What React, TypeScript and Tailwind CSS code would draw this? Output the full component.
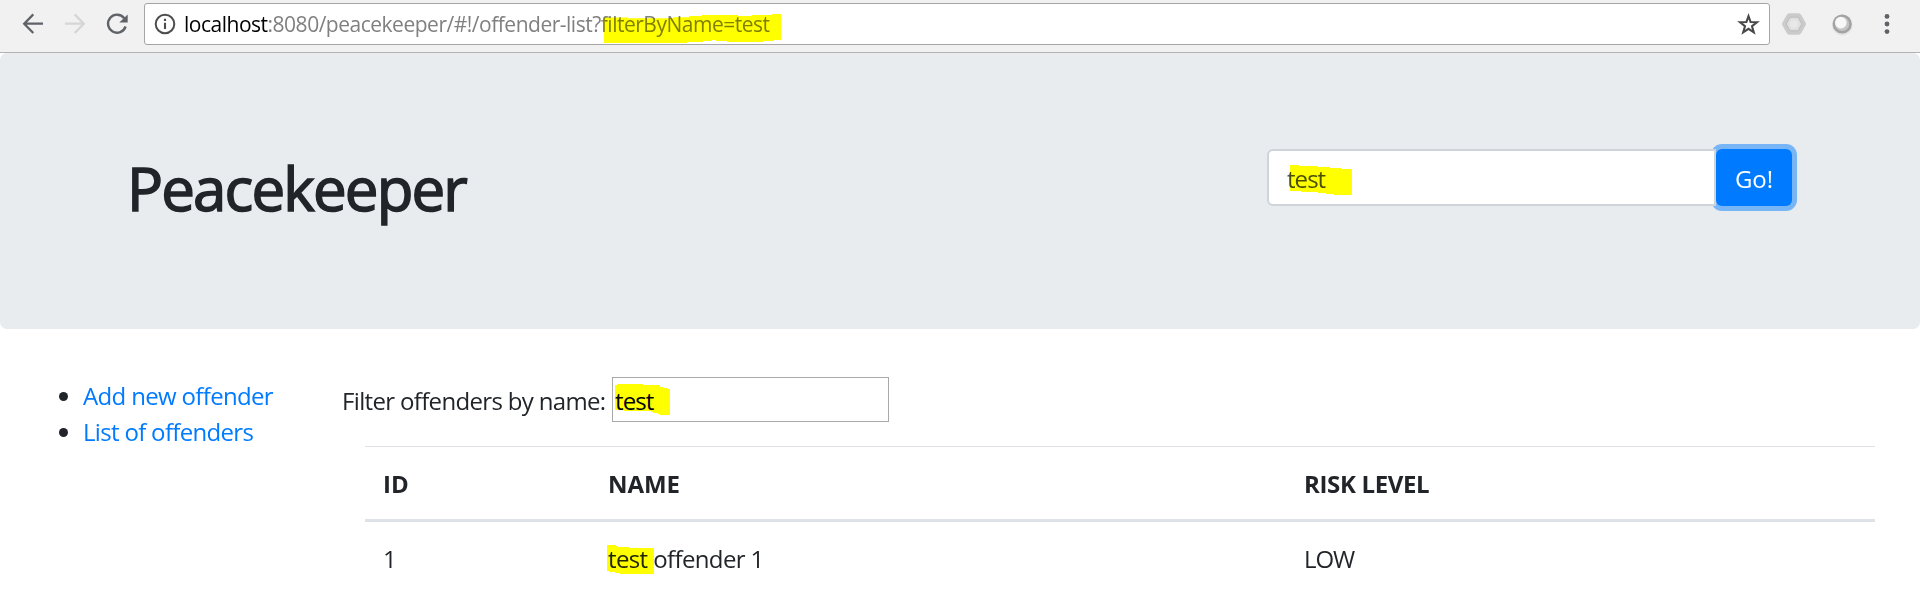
import React from "react";

const highlight = "absolute pointer-events-none mix-blend-multiply";

function Toolbar() {
  return (
    <header className="flex h-[53px] items-start border-b border-[#b2b2b2] bg-[#f1f1f1] pt-[3px]">
      <svg className="block h-[43px] w-[144px] shrink-0" viewBox="0 3 144 43" fill="none">
        <path d="M43 23.7H25M33.3 14.4L24.2 23.7L33.3 33" stroke="#5f6368" strokeWidth="2.3" />
        <path d="M65 23.7H83M74.7 14.4L83.8 23.7L74.7 33" stroke="#d5d6d7" strokeWidth="2.3" />
        <path d="M124.2 18.2A9 9 0 1 0 125.6 26.5" stroke="#5f6368" strokeWidth="2.4" />
        <path d="M127.7 14.4V22.6H119.3Z" fill="#5f6368" />
      </svg>
      <div className="relative flex h-[42px] w-[1626px] items-center rounded-[3px] border border-[#a6a6a6] bg-white pl-[9px]">
        <svg className="size-[22px] shrink-0" viewBox="0 0 22 22" fill="none">
          <circle cx="11" cy="11" r="9.3" stroke="#4d4d4d" strokeWidth="2" />
          <path d="M11 9.7V16M11 5.7V8" stroke="#4d4d4d" strokeWidth="2.1" />
        </svg>
        <div className="ml-[8px] flex whitespace-pre text-[21px] leading-[30px] text-[#808080]">
          <span className="tracking-[-0.49px] text-black">localhost</span>
          <span className="tracking-[-0.49px]">:8080/peacekeeper/#!/offender-list?filterByName=test</span>
        </div>
        <svg className={`${highlight} left-[459px] top-[10px] h-[30px] w-[178px]`} viewBox="604 14 178 30">
          <path d="M604 17.5H627V18.3H673V17.3H689V16H702V15H738V16H752V15H772V14H781V40H774V41H763V42H727V41H716V40H712V41H703V42H687V43H604Z" fill="#ffff00" />
        </svg>
        <svg className="ml-auto mr-[9px] size-[23px]" viewBox="0 0 23 23" fill="none">
          <path d="M11.5 3.2L13.6 9L20 9.2L15 13.2L16.8 19.3L11.5 15.8L6.2 19.3L8 13.2L3 9.2L9.4 9Z" stroke="#484848" strokeWidth="2.1" />
        </svg>
      </div>
      <svg className="block h-[43px] w-[150px] shrink-0" viewBox="1770 3 150 43" fill="none">
        <path d="M1789 13.2H1799L1801 14.5L1805.8 23L1805.8 25L1801 33.5L1799 34.8H1789L1787 33.5L1782.2 25V23L1787 14.5Z" fill="#cbcbcb" />
        <path d="M1790 17.2H1798L1801.8 24L1798 30.8H1790L1786.2 24Z" fill="#e0e0e0" stroke="#bdbdbd" />
        <circle cx="1794" cy="24" r="4" fill="#e8e8e8" />
        <circle cx="1842.2" cy="25" r="10.4" fill="#e3e3e3" />
        <circle cx="1842.2" cy="24" r="9.6" fill="#a3a3a3" />
        <circle cx="1842.2" cy="24" r="7" fill="#c6c6c6" />
        <circle cx="1840.8" cy="22.6" r="5.8" fill="#f8f8f8" />
        <g fill="#5f6368">
          <circle cx="1887" cy="16.4" r="2.4" />
          <circle cx="1887" cy="24" r="2.4" />
          <circle cx="1887" cy="31.6" r="2.4" />
        </g>
      </svg>
    </header>
  );
}

function Banner() {
  return (
    <section className="flex h-[276px] items-start justify-between rounded-[7px] bg-[#e9ecef] pl-[127px] pr-[128px]">
      <h1 className="mt-[99px] text-[60px] font-medium leading-[72px] tracking-[-1.85px] [-webkit-text-stroke:1.5px_#212529]">Peacekeeper</h1>
      <div className="mt-[96px] flex h-[57px]">
        <div className="relative z-10 w-[449px] rounded-l-[6px] border-2 border-[#ced4da] bg-white pl-[18px] text-[#495057]">
          <span className="block pt-[10px] leading-[36px] tracking-[-0.95px]">test</span>
          <svg className={`${highlight} left-[21px] top-[14px] h-[30px] w-[62px]`} viewBox="1290 165 62 30">
            <path d="M1290 165H1299V166H1318V167H1330V168H1341V169H1352V195H1334V194H1326V193H1318V192H1301V191H1290Z" fill="#ffff00" />
          </svg>
        </div>
        <button className="h-[57px] w-[76px] rounded-[6px] bg-[#007bff] pt-[3px] leading-[36px] text-white shadow-[0_0_0_5px_#77b5f7]">Go!</button>
      </div>
    </section>
  );
}

const links = [
  { label: "Add new offender", track: "tracking-[-0.66px]" },
  { label: "List of offenders", track: "tracking-[-0.68px]" },
];

function Sidebar() {
  return (
    <nav className="w-[342px] shrink-0 pt-[49px]">
      <ul>
        {links.map(({ label, track }) => (
          <li key={label} className="flex h-9 items-center pl-[59px]">
            <span className="mr-[15px] size-[9px] rounded-full bg-[#212529]" />
            <a className={`leading-9 text-[#007bff] ${track}`}>{label}</a>
          </li>
        ))}
      </ul>
    </nav>
  );
}

function Offenders() {
  return (
    <main className="w-[1533px] pt-[48px]">
      <div className="flex h-[45px]">
        <label className="w-[270px] whitespace-nowrap pt-[6px] leading-9 tracking-[-0.66px]">Filter offenders by name:</label>
        <div className="relative h-[45px] w-[277px] border border-[#a9a9a9] bg-white pl-[2px] text-black">
          <span className="block pt-[5px] leading-9 tracking-[-0.9px]">test</span>
          <svg className={`${highlight} left-[2px] top-[6px] h-[31px] w-[55px]`} viewBox="615 384 55 31">
            <path d="M617 384H643V385H660V387H663V388H668V389H670V415H660V414H658V413H653V412H651V411H624V410H615V385H617Z" fill="#ffff00" />
          </svg>
        </div>
      </div>
      <table className="ml-[23px] mt-[24px] w-[1510px] table-fixed border-collapse text-left">
        <colgroup>
          <col className="w-[225px]" />
          <col className="w-[696px]" />
          <col />
        </colgroup>
        <thead>
          <tr className="h-[74px] border-b-[3px] border-t border-[#dee2e6] font-bold">
            <th className="pl-[18px] pt-[2px]">ID</th>
            <th className="pl-[18px] pt-[2px] tracking-[-0.06px]">NAME</th>
            <th className="pl-[18px] pt-[2px] tracking-[-0.35px]">RISK LEVEL</th>
          </tr>
        </thead>
        <tbody>
          <tr className="h-[76px]">
            <td className="pl-[18px]">1</td>
            <td className="relative pl-[18px]">
              <span className="tracking-[-0.62px]">test offender 1</span>
              <svg className={`${highlight} left-[17px] top-[23px] h-[30px] w-[47px]`} viewBox="607 544 47 30">
                <path d="M607 544H616V545H618V546H629V547H654V573H620V572H615V571H609V570H607Z" fill="#ffff00" />
              </svg>
            </td>
            <td className="pl-[18px] tracking-[-1.09px]">LOW</td>
          </tr>
        </tbody>
      </table>
    </main>
  );
}

export default function App() {
  return (
    <div className="h-[615px] w-[1920px] overflow-hidden bg-white font-['Open_Sans','Noto_Sans',sans-serif] text-[24px] leading-[36px] text-[#212529]">
      <Toolbar />
      <Banner />
      <div className="flex">
        <Sidebar />
        <Offenders />
      </div>
    </div>
  );
}
